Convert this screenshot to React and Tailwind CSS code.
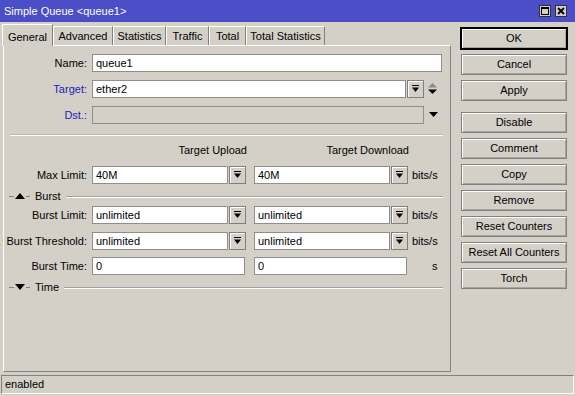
import React from 'react';

const DropBtn = () => (
  <div className="ml-px flex h-[18px] w-[17px] shrink-0 items-center justify-center border border-[#808080] bg-[#d4d0c8] shadow-[inset_1px_1px_0_#fff]">
    <svg width="7" height="8" viewBox="0 0 7 8">
      <rect x="0" y="0" width="7" height="1" fill="#000" />
      <path d="M0 2.5h7L3.5 7z" fill="#000" />
    </svg>
  </div>
);

const Field = ({ value, className = '', disabled }) => (
  <div
    className={`flex h-[18px] shrink-0 items-center border border-[#8e8e8e] pl-[3px] text-[11px] text-black ${
      disabled ? 'bg-[#d4d0c8]' : 'bg-white'
    } ${className}`}
  >
    {value}
  </div>
);

const Label = ({ children, blue }) => (
  <div className={`w-[84px] shrink-0 pr-[1px] text-right text-[11px] ${blue ? 'text-[#1c1cb8]' : 'text-black'}`}>
    {children}
  </div>
);

const Section = ({ title, open }) => (
  <div className="flex h-[12px] items-center">
    <div className="ml-[5px] w-[5px] border-t border-[#808080]" />
    <svg width="10" height="6" viewBox="0 0 10 6" className="mx-[1px]">
      {open ? <path d="M0 6h10L5 0z" fill="#000" /> : <path d="M0 0h10L5 6z" fill="#000" />}
    </svg>
    <div className="w-[4px] border-t border-[#808080]" />
    <span className="ml-[5px] text-[11px] text-black">{title}</span>
    <div className="ml-[5px] mr-[7px] flex-1 border-t border-[#a0a0a0] shadow-[0_1px_0_#fff]" />
  </div>
);

const Btn = ({ children, primary, className = '' }) => (
  <div
    className={`flex h-[21px] w-[106px] items-center justify-center border bg-[#d4d0c8] text-[11px] text-black shadow-[inset_1px_1px_0_#fff,inset_-1px_-1px_0_#a8a59e] ${
      primary ? 'border-black outline outline-1 outline-black' : 'border-[#808080]'
    } ${className}`}
  >
    {children}
  </div>
);

const tabs = [
  ['Advanced', 'w-[60px]'],
  ['Statistics', 'w-[53px]'],
  ['Traffic', 'w-[43px]'],
  ['Total', 'w-[37px]'],
  ['Total Statistics', 'w-[79px]'],
];

export default function App() {
  return (
    <div className="flex h-[396px] w-[575px] flex-col overflow-hidden bg-[#d4d0c8] font-['Liberation_Sans',Arial,sans-serif] text-[11px]">
      {/* title bar */}
      <div className="flex h-[22px] shrink-0 items-center justify-between bg-[#4b4ec6] pl-[4px] pr-[8px]">
        <span className="text-[11px] text-white">Simple Queue &lt;queue1&gt;</span>
        <div className="flex gap-[4px]">
          <div className="flex h-[12px] w-[12px] items-center justify-center border border-[#303030] bg-[#d4d0c8]">
            <svg width="8" height="8" viewBox="0 0 8 8">
              <rect x="0.5" y="0.5" width="7" height="7" fill="none" stroke="#000" />
              <rect x="0" y="0" width="8" height="2" fill="#000" />
            </svg>
          </div>
          <div className="flex h-[12px] w-[12px] items-center justify-center border border-[#303030] bg-[#d4d0c8]">
            <svg width="8" height="8" viewBox="0 0 8 8">
              <path d="M1 1l6 6M7 1L1 7" stroke="#000" strokeWidth="1.8" />
            </svg>
          </div>
        </div>
      </div>

      <div className="flex flex-1">
        {/* left: tabs + panel */}
        <div className="flex w-[451px] flex-col">
          <div className="flex h-[23px] items-end pl-[2px]">
            <div className="relative z-10 -mb-px flex h-[22px] w-[51px] items-start justify-center border-l border-t border-r border-l-white border-t-white border-r-[#808080] bg-[#d4d0c8] pt-[4px]">
              General
            </div>
            {tabs.map(([t, w]) => (
              <div
                key={t}
                className={`flex h-[19px] items-center justify-center border-l border-t border-r border-l-white border-t-white border-r-[#808080] bg-[#d4d0c8] ${w}`}
              >
                {t}
              </div>
            ))}
          </div>

          <div className="ml-[3px] flex h-[327px] flex-col border border-l-white border-t-white border-r-[#808080] border-b-[#808080] pt-[8px]">
            <div className="flex items-center">
              <Label>Name:</Label>
              <Field value="queue1" className="ml-[4px] w-[350px]" />
            </div>
            <div className="mt-[8px] flex items-center">
              <Label blue>Target:</Label>
              <Field value="ether2" className="ml-[4px] w-[314px]" />
              <DropBtn />
              <svg width="10" height="12" viewBox="0 0 10 12" className="ml-[4px]">
                <path d="M0 4.5h9L4.5 0z" fill="#8a8a8a" />
                <path d="M0 6.5h9L4.5 11z" fill="#000" />
              </svg>
            </div>
            <div className="mt-[8px] flex items-center">
              <Label blue>Dst.:</Label>
              <Field value="" disabled className="ml-[4px] w-[332px]" />
              <svg width="9" height="6" viewBox="0 0 9 6" className="ml-[5px]">
                <path d="M0 0h9L4.5 5z" fill="#000" />
              </svg>
            </div>

            <div className="ml-[6px] mr-[7px] mt-[10px] border-t border-[#bcb8ae] shadow-[0_1px_0_#fff]" />

            <div className="mt-[9px] flex h-[13px] items-center">
              <div className="w-[88px] shrink-0" />
              <div className="w-[155px] text-right">Target Upload</div>
              <div className="ml-[9px] w-[153px] text-right">Target Download</div>
            </div>

            <div className="mt-[9px] flex items-center">
              <Label>Max Limit:</Label>
              <Field value="40M" className="ml-[4px] w-[136px]" />
              <DropBtn />
              <Field value="40M" className="ml-[8px] w-[136px]" />
              <DropBtn />
              <span className="ml-[4px]">bits/s</span>
            </div>

            <div className="mt-[6px]">
              <Section title="Burst" open />
            </div>

            <div className="mt-[4px] flex items-center">
              <Label>Burst Limit:</Label>
              <Field value="unlimited" className="ml-[4px] w-[136px]" />
              <DropBtn />
              <Field value="unlimited" className="ml-[8px] w-[136px]" />
              <DropBtn />
              <span className="ml-[4px]">bits/s</span>
            </div>
            <div className="mt-[8px] flex items-center">
              <Label>Burst Threshold:</Label>
              <Field value="unlimited" className="ml-[4px] w-[136px]" />
              <DropBtn />
              <Field value="unlimited" className="ml-[8px] w-[136px]" />
              <DropBtn />
              <span className="ml-[4px]">bits/s</span>
            </div>
            <div className="mt-[7px] flex items-center">
              <Label>Burst Time:</Label>
              <Field value="0" className="ml-[4px] w-[153px]" />
              <Field value="0" className="ml-[9px] w-[153px]" />
              <span className="ml-[25px]">s</span>
            </div>

            <div className="mt-[6px]">
              <Section title="Time" />
            </div>
          </div>
        </div>

        {/* right: buttons */}
        <div className="ml-[10px] mt-[6px] flex flex-col gap-[5px]">
          <Btn primary>OK</Btn>
          <Btn>Cancel</Btn>
          <Btn>Apply</Btn>
          <Btn className="mt-[6px]">Disable</Btn>
          <Btn>Comment</Btn>
          <Btn>Copy</Btn>
          <Btn>Remove</Btn>
          <Btn>Reset Counters</Btn>
          <Btn>Reset All Counters</Btn>
          <Btn>Torch</Btn>
        </div>
      </div>

      {/* status bar */}
      <div className="mx-[1px] mb-[2px] mt-[3px] flex h-[19px] shrink-0 items-center border border-l-[#808080] border-t-[#808080] border-r-white border-b-white pl-[3px]">
        enabled
      </div>
    </div>
  );
}
